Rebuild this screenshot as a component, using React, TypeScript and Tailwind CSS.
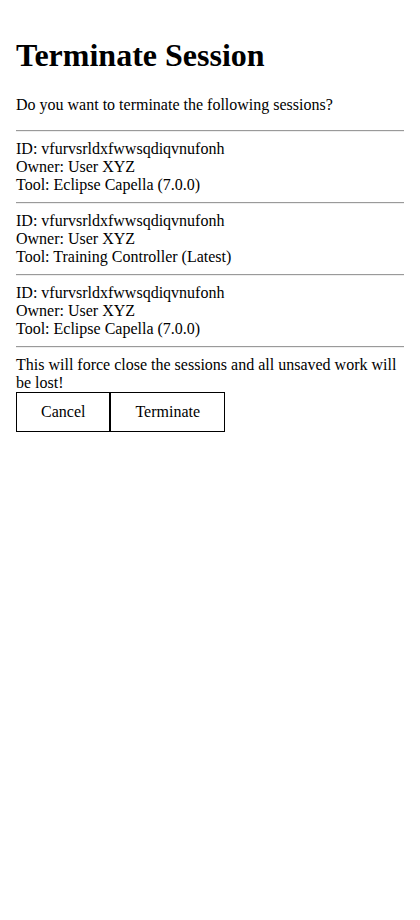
const sessions = [
  { id: 'vfurvsrldxfwwsqdiqvnufonh', owner: 'User XYZ', tool: 'Eclipse Capella (7.0.0)' },
  { id: 'vfurvsrldxfwwsqdiqvnufonh', owner: 'User XYZ', tool: 'Training Controller (Latest)' },
  { id: 'vfurvsrldxfwwsqdiqvnufonh', owner: 'User XYZ', tool: 'Eclipse Capella (7.0.0)' },
]

const App = () => {
  return (
    <div className="bg-white min-h-screen px-4 pt-[16px] text-black font-['Liberation_Serif',serif] text-base leading-[18px]">
      <h1 className="text-[32px] leading-[36.8px] font-bold mt-[21.44px] mb-[21.44px]">Terminate Session</h1>
      <p className="mb-4">Do you want to terminate the following sessions?</p>
      <hr className="border-t border-[#9a9a9a] border-b border-b-[#eeeeee] my-2" />
      {sessions.map((s, i) => (
        <div key={i}>
          <div>ID: {s.id}</div>
          <div>Owner: {s.owner}</div>
          <div>Tool: {s.tool}</div>
          <hr className="border-t border-[#9a9a9a] border-b border-b-[#eeeeee] my-2" />
        </div>
      ))}
      <p>This will force close the sessions and all unsaved work will be lost!</p>
      <div className="flex">
        <button className="border border-black px-6 h-10 bg-white">Cancel</button>
        <button className="border border-black px-6 h-10 bg-white">Terminate</button>
      </div>
    </div>
  )
}

export default App
